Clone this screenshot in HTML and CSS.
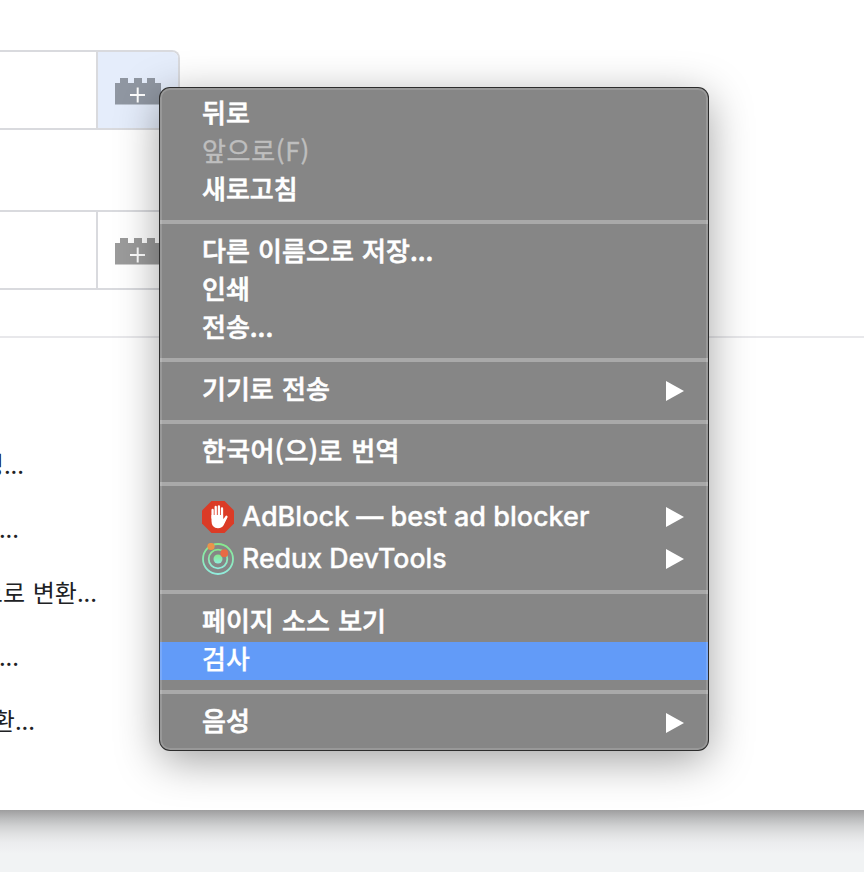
FILE: index.html
```html
<!DOCTYPE html>
<html lang="ko">
<head>
<meta charset="utf-8">
<title>메뉴</title>
<link rel="stylesheet" href="styles.css">
</head>
<body>
<main class="page">
  <section class="fields">
    <div class="field">
      <button class="brick active"><svg width="46" height="28" viewBox="0 0 46 28"><path d="M0 6H5V1H13V6H19V1H27V6H32V1H40V6H46V27.5H0Z"/><path class="plus" d="M22.7 10.5V25.5M15 18H30"/></svg></button>
    </div>
    <div class="field">
      <button class="brick"><svg width="46" height="28" viewBox="0 0 46 28"><path d="M0 6H5V1H13V6H19V1H27V6H32V1H40V6H46V27.5H0Z"/><path class="plus" d="M22.7 10.5V25.5M15 18H30"/></svg></button>
    </div>
  </section>
  <ul class="jobs">
    <li class="job w-a">성...</li>
    <li class="job w-b">...</li>
    <li class="job w-c">으로 변환...</li>
    <li class="job w-b">...</li>
    <li class="job w-d">변환...</li>
  </ul>
</main>
<footer class="backdrop"></footer>
<nav class="menu">
  <div class="item"><span>뒤로</span></div>
  <div class="item disabled"><span>앞으로(F)</span></div>
  <div class="item"><span>새로고침</span></div>
  <hr>
  <div class="item"><span class="device">다른 이름으로 저장...</span></div>
  <div class="item"><span>인쇄</span></div>
  <div class="item"><span>전송...</span></div>
  <hr>
  <div class="item"><span class="device">기기로 전송</span><i class="arrow"></i></div>
  <hr>
  <div class="item"><span class="translate">한국어(으)로 번역</span></div>
  <hr>
  <div class="item ext">
    <svg class="icon" width="32" height="32" viewBox="0 0 32 32"><path fill="#db3b26" d="M9.5 0H22.5L32 9.5V22.5L22.5 32H9.5L0 22.5V9.5Z"/><g fill="none" stroke="#fff" stroke-width="2.3" stroke-linecap="round"><path d="M10.6 9V17M13.7 6V17M16.9 5.4V17M20 7.5V18M24.4 15.8L21.5 21"/></g><path fill="#fff" d="M9.5 14H21.1V18L24 15.5L25.4 16.2L22 23.5Q20.2 27.3 16 27.3Q9.5 27.3 9.5 20Z"/></svg>
    <span class="adblock">AdBlock — best ad blocker</span><i class="arrow"></i>
  </div>
  <div class="item ext">
    <svg class="icon" width="32" height="32" viewBox="0 0 32 32"><defs><linearGradient id="g" x1="0" y1="0" x2="0" y2="1"><stop offset="0" stop-color="#86e88c"/><stop offset="1" stop-color="#91ecdd"/></linearGradient></defs><g fill="none" stroke="url(#g)" stroke-width="1.8"><circle cx="16" cy="16" r="15"/><circle cx="16" cy="16" r="9.3"/></g><circle cx="16" cy="16" r="4.5" fill="url(#g)"/><circle cx="9" cy="3.5" r="3.6" fill="#ea944a"/><circle cx="22.3" cy="10.2" r="3.9" fill="#e86b45"/></svg>
    <span class="redux">Redux DevTools</span><i class="arrow"></i>
  </div>
  <hr>
  <div class="item"><span class="source">페이지 소스 보기</span></div>
  <div class="item selected"><span>검사</span></div>
  <hr>
  <div class="item"><span>음성</span><i class="arrow"></i></div>
</nav>
</body>
</html>
```
FILE: styles.css
```css
* { box-sizing: border-box; }
html, body { margin: 0; height: 872px; overflow: hidden; }
body {
  position: relative;
  background: #f1f3f4;
  font-family: "Noto Sans CJK KR", sans-serif;
}
.page {
  height: 810px;
  padding-top: 50px;
  background: #fff;
}
.backdrop {
  height: 62px;
  background: linear-gradient(#9e9e9f 0, #b9babb 8px, #d0d1d2 16px, #e0e1e2 24px, #ebecee 32px, #f1f3f4 44px);
}
.fields {
  display: flex;
  flex-direction: column;
  gap: 80px;
  height: 288px;
  border-bottom: 2px solid #e8e8eb;
}
.field {
  display: flex;
  justify-content: flex-end;
  width: 180px;
  height: 80px;
  border: 2px solid #d9dade;
  border-left: 0;
  border-radius: 0 8px 8px 0;
  overflow: hidden;
}
.brick {
  width: 82px;
  padding: 1px 0 0;
  border: 0;
  border-left: 2px solid #d9dade;
  background: #fff;
}
.brick svg { display: block; margin: 0 auto 0 17px; fill: #9b9b9b; }
.brick.active { background: #e5edfb; }
.brick.active svg { fill: #9097a2; }
.brick .plus { fill: none; stroke: #fff; stroke-width: 2; }
.jobs {
  margin: 0;
  padding: 94px 0 0;
  list-style: none;
}
.job {
  display: flex;
  justify-content: flex-end;
  height: 64px;
  line-height: 64px;
  font-size: 24px;
  color: #202124;
  white-space: nowrap;
}
.w-a { width: 24px; }
.w-b { width: 19px; }
.w-c { width: 97px; word-spacing: 1px; }
.w-d { width: 35px; }
.menu {
  position: absolute;
  left: 160px;
  top: 88px;
  width: 548px;
  height: 662px;
  padding: 8px 0;
  border-radius: 10px;
  background: #868686;
  box-shadow: 0 0 0 1px #2c2c2c, 0 10px 44px rgba(0, 0, 0, .38);
}
.menu::after {
  content: "";
  position: absolute;
  inset: 0;
  border: 2px solid rgba(255, 255, 255, .15);
  border-radius: 10px;
}
.item {
  display: flex;
  align-items: center;
  height: 38px;
  padding: 0 24px 0 42px;
  color: #fff;
  font-size: 26px;
  font-weight: 500;
  line-height: 34px;
  white-space: nowrap;
  -webkit-text-stroke: .6px currentColor;
}
.item span { margin-top: -6px; }
.item.disabled {
  color: #bebebe;
  font-weight: 400;
  letter-spacing: .7px;
  -webkit-text-stroke-width: .4px;
}
.item.selected { background: #629bf8; -webkit-text-stroke-width: .2px; }
.menu hr {
  height: 4px;
  margin: 10px 0;
  border: 0;
  background: #a9a9a9;
}
.arrow {
  width: 18px;
  height: 20px;
  margin-left: auto;
  background: #fff;
  clip-path: polygon(0 0, 100% 50%, 0 100%);
}
.device, .source { word-spacing: 1px; }
.translate { letter-spacing: .35px; word-spacing: 1px; }
.item.ext { height: 42px; font-family: Inter, sans-serif; -webkit-text-stroke-width: .35px; }
.ext span { margin: 0 0 0 8px; }
.ext .adblock { font-size: 27px; }
.ext .redux { margin-top: -2px; font-size: 26.7px; }
.icon { flex: none; -webkit-text-stroke-width: 0; }
```
